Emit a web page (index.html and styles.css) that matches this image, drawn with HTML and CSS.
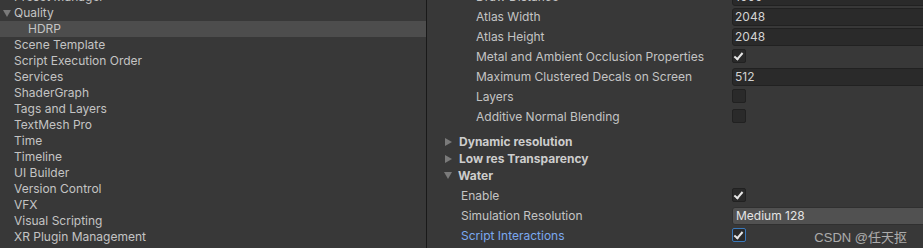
FILE: index.html
```html
<!DOCTYPE html>
<html lang="en">
<head>
    <meta charset="UTF-8">
    <title>Project Settings - Quality</title>
    <link rel="stylesheet" href="styles.css">
</head>
<body>
    <aside class="sidebar">
        <ul class="tree">
            <li class="tree-item">Preset Manager</li>
            <li class="tree-item open"><span class="arrow down"></span>Quality</li>
            <li class="tree-item child selected">HDRP</li>
            <li class="tree-item">Scene Template</li>
            <li class="tree-item">Script Execution Order</li>
            <li class="tree-item">Services</li>
            <li class="tree-item">ShaderGraph</li>
            <li class="tree-item">Tags and Layers</li>
            <li class="tree-item">TextMesh Pro</li>
            <li class="tree-item">Time</li>
            <li class="tree-item">Timeline</li>
            <li class="tree-item">UI Builder</li>
            <li class="tree-item">Version Control</li>
            <li class="tree-item">VFX</li>
            <li class="tree-item">Visual Scripting</li>
            <li class="tree-item">XR Plugin Management</li>
        </ul>
    </aside>

    <main class="inspector">
        <div class="group nested">
            <div class="prop">
                <span class="label">Draw Distance</span>
                <span class="field">1000</span>
            </div>
            <div class="prop">
                <span class="label">Atlas Width</span>
                <span class="field">2048</span>
            </div>
            <div class="prop">
                <span class="label">Atlas Height</span>
                <span class="field">2048</span>
            </div>
            <div class="prop">
                <span class="label">Metal and Ambient Occlusion Properties</span>
                <span class="toggle checked"></span>
            </div>
            <div class="prop">
                <span class="label">Maximum Clustered Decals on Screen</span>
                <span class="field">512</span>
            </div>
            <div class="prop">
                <span class="label">Layers</span>
                <span class="toggle"></span>
            </div>
            <div class="prop">
                <span class="label">Additive Normal Blending</span>
                <span class="toggle"></span>
            </div>
        </div>

        <div class="foldouts">
            <div class="foldout"><span class="arrow right"></span>Dynamic resolution</div>
            <div class="foldout"><span class="arrow right"></span>Low res Transparency</div>
            <div class="foldout"><span class="arrow down"></span>Water</div>
        </div>

        <div class="group">
            <div class="prop">
                <span class="label">Enable</span>
                <span class="toggle checked"></span>
            </div>
            <div class="prop">
                <span class="label">Simulation Resolution</span>
                <span class="field dropdown">Medium 128</span>
            </div>
            <div class="prop focused">
                <span class="label">Script Interactions</span>
                <span class="toggle checked"></span>
            </div>
        </div>

        <div class="watermark">CSDN @任天抠</div>
    </main>
</body>
</html>
```
FILE: styles.css
```css
body {
    margin: 0;
    width: 923px;
    height: 248px;
    overflow: hidden;
    display: flex;
    background: #383838;
    color: #c4c4c4;
    font-family: Inter, "Noto Sans", sans-serif;
    font-size: 12px;
}

/* left tree */
.sidebar {
    width: 426px;
    flex-shrink: 0;
    overflow: hidden;
}

.tree {
    list-style: none;
    margin: -11px 0 0 0;
    padding: 0;
}

.tree-item {
    height: 16px;
    line-height: 16px;
    padding-left: 14px;
    position: relative;
    white-space: nowrap;
}

.tree-item.child {
    padding-left: 28px;
}

.tree-item.selected {
    background: #4d4d4d;
}

.tree-item .arrow {
    position: absolute;
    left: 3px;
    top: 5px;
}

.arrow {
    display: inline-block;
    width: 0;
    height: 0;
}

.arrow.down {
    border-left: 4px solid transparent;
    border-right: 4px solid transparent;
    border-top: 7px solid #7a7a7a;
}

.arrow.right {
    border-top: 4px solid transparent;
    border-bottom: 4px solid transparent;
    border-left: 7px solid #7a7a7a;
}

/* right inspector */
.inspector {
    flex: 1;
    border-left: 1px solid #191919;
    position: relative;
    overflow: hidden;
}

.group {
    padding-left: 34px;
}

.group.nested {
    margin-top: -14px;
    padding-left: 49px;
}

.prop {
    display: flex;
    align-items: center;
    height: 20px;
}

.label {
    width: 256px;
    flex-shrink: 0;
    white-space: nowrap;
}

.group:not(.nested) .label {
    width: 271px;
}

.field {
    flex: 1;
    height: 16px;
    line-height: 16px;
    margin-top: 1px;
    margin-right: -6px;
    padding-left: 2px;
    background: #2a2a2a;
    border: 1px solid #212121;
    border-radius: 3px;
    color: #d2d2d2;
}

.field.dropdown {
    background: #515151;
    border-color: #303030;
    color: #e4e4e4;
    padding-left: 3px;
}

.toggle {
    width: 12px;
    height: 12px;
    background: #2a2a2a;
    border: 1px solid #212121;
    border-radius: 2px;
    position: relative;
}

.toggle.checked::after {
    content: "";
    position: absolute;
    left: 3px;
    top: 1px;
    width: 3px;
    height: 7px;
    border-right: 2px solid #e6e6e6;
    border-bottom: 2px solid #e6e6e6;
    transform: rotate(40deg);
}

.focused .label {
    color: #7ba9f0;
}

.focused .toggle {
    border-color: #3a79bb;
}

.foldouts {
    margin-top: 7px;
    padding-left: 18px;
}

.foldout {
    display: flex;
    align-items: center;
    height: 17px;
    font-weight: bold;
    color: #cdcdcd;
}

.foldout:first-child {
    margin-top: 1px;
}

.foldout .arrow {
    margin-right: 7px;
}

.foldout .arrow.down {
    margin-left: -1px;
    margin-right: 6px;
}

.foldouts + .group {
    margin-top: 1px;
}

.watermark {
    position: absolute;
    right: 16px;
    bottom: 2px;
    font-family: "Liberation Sans", "Noto Sans CJK SC", sans-serif;
    font-size: 13px;
    color: rgba(225, 225, 225, 0.7);
}
```
